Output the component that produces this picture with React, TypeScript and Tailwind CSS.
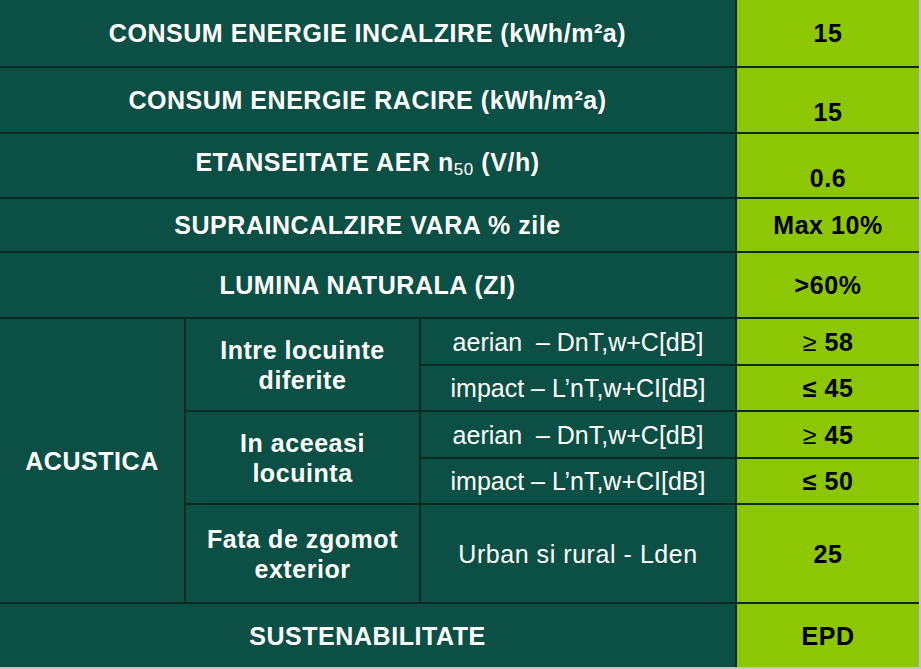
import React from "react";

const D = "bg-[#0c4f44] text-white flex items-center justify-center text-center";
const L = "bg-[#8dc603] text-black flex items-center justify-center text-center font-bold";

export default function App() {
  return (
    <div
      className="w-[921px] h-[669px] bg-[#c4c4c4] overflow-hidden"
      style={{ fontFamily: '"Liberation Sans", Arial, sans-serif' }}
    >
      <div className="grid grid-cols-[184px_233px_314px_182px] grid-rows-[66px_64px_63px_52px_64px_45px_44px_45px_44px_97px_63px] gap-[2px] bg-[#0b2a24] w-[919px] h-[667px] text-[25px] leading-[30px] tracking-[0.55px]">
        <div className={`${D} col-span-3 font-bold`}>CONSUM ENERGIE INCALZIRE (kWh/m²a)</div>
        <div className={L}>15</div>

        <div className={`${D} col-span-3 font-bold`}>CONSUM ENERGIE RACIRE (kWh/m²a)</div>
        <div className={`${L} pt-[24px]`}>15</div>

        <div className={`${D} col-span-3 font-bold`}>
          <span>
            ETANSEITATE AER n<span className="text-[17px] align-[-4px] font-normal">50</span> (V/h)
          </span>
        </div>
        <div className={`${L} pt-[24px]`}>0.6</div>

        <div className={`${D} col-span-3 font-bold`}>SUPRAINCALZIRE VARA % zile</div>
        <div className={L}>Max 10%</div>

        <div className={`${D} col-span-3 font-bold`}>LUMINA NATURALA (ZI)</div>
        <div className={L}>&gt;60%</div>

        <div className={`${D} row-span-5 font-bold`}>ACUSTICA</div>
        <div className={`${D} row-span-2 font-bold`}>
          Intre locuinte
          <br />
          diferite
        </div>
        <div className={`${D} tracking-normal`}>aerian &nbsp;– DnT,w+C[dB]</div>
        <div className={L}>
          <span className="font-normal">≥</span>&nbsp;58
        </div>
        <div className={`${D} tracking-normal`}>impact – L’nT,w+CI[dB]</div>
        <div className={L}>≤ 45</div>

        <div className={`${D} row-span-2 font-bold`}>
          In aceeasi
          <br />
          locuinta
        </div>
        <div className={`${D} tracking-normal`}>aerian &nbsp;– DnT,w+C[dB]</div>
        <div className={L}>
          <span className="font-normal">≥</span>&nbsp;45
        </div>
        <div className={`${D} tracking-normal`}>impact – L’nT,w+CI[dB]</div>
        <div className={L}>≤ 50</div>

        <div className={`${D} font-bold`}>
          Fata de zgomot
          <br />
          exterior
        </div>
        <div className={D}>Urban si rural - Lden</div>
        <div className={L}>25</div>

        <div className={`${D} col-span-3 font-bold`}>SUSTENABILITATE</div>
        <div className={L}>EPD</div>
      </div>
    </div>
  );
}
